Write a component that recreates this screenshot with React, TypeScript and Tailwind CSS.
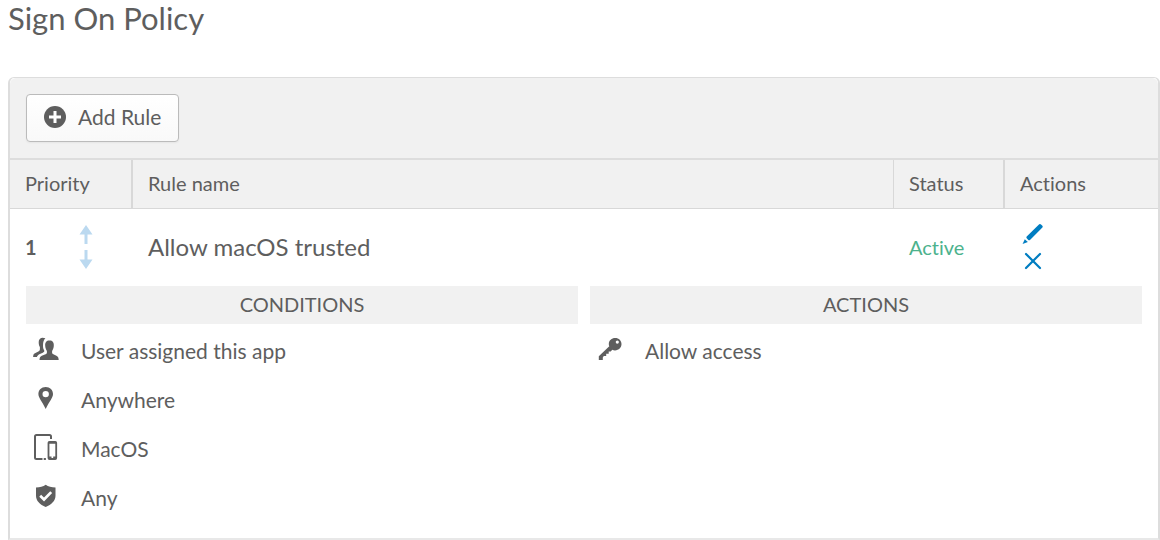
import type { ReactNode } from "react";

function PlusCircleIcon() {
  return (
    <svg width="22" height="22" viewBox="0 0 22 22" aria-hidden="true">
      <circle cx="11" cy="11" r="11" fill="#5e5e5e" />
      <path d="M11 5v12M5 11h12" stroke="#fff" strokeWidth="3" />
    </svg>
  );
}

function ArrowUpIcon() {
  return (
    <svg width="14" height="19" viewBox="0 0 14 19" fill="#bbd9f0" aria-hidden="true">
      <path d="M7 0l6.5 9.5h-5V19h-3V9.5h-5z" />
    </svg>
  );
}

function ArrowDownIcon() {
  return (
    <svg width="14" height="19" viewBox="0 0 14 19" fill="#bbd9f0" aria-hidden="true">
      <path d="M7 19L.5 9.5h5V0h3v9.5h5z" />
    </svg>
  );
}

function PencilIcon() {
  return (
    <svg width="22" height="22" viewBox="0 0 22 22" fill="#007dc1" aria-hidden="true">
      <path d="M17.200 1.300q.9-.8 1.800.1l1.400 1.400q.8.9 0 1.700L8 16.900q-.9.7-1.700 0l-1.600-1.600q-.8-.9 0-1.700z" />
      <path d="M2.800 16.200l3.100 2.900L.6 21z" />
    </svg>
  );
}

function CrossIcon() {
  return (
    <svg width="18" height="18" viewBox="0 0 18 18" fill="none" aria-hidden="true">
      <path d="M2 2l14 14M16 2L2 16" stroke="#007dc1" strokeWidth="2.2" strokeLinecap="round" />
    </svg>
  );
}

function PeopleIcon() {
  return (
    <svg width="26" height="24" viewBox="0 0 26 24" fill="#5e5e5e" aria-hidden="true">
      <path d="M12.400 1.300C8.600-.4 5.700 1.500 5.700 5c0 2 .3 3.600 1.200 5v2.300c0 1.200-.7 1.800-2 2.400L2 16.300C.6 17 .2 18 .1 20h3.800c.5-1.300 1.500-2.200 3-2.900l2.900-1.300c1.300-.6 1.900-1.400 1.200-2.700-.8-1.300-1-2.800-1-4.600 0-3.400.7-5.700 2.400-7.200z" />
      <path d="M16.500 3.600c3.200 0 4.500 2 4.300 5.200-.1 2-.7 3.900-1.700 5.100v1.900c0 .7.500 1.100 1.300 1.500l3 1.400c1.700.8 2.200 2 2.300 4.300H6.500c.1-2.300.6-3.500 2.300-4.300l3.800-1.400c.8-.4 1.300-.8 1.300-1.500v-1.900c-1-1.200-1.600-3.100-1.700-5.100-.2-3.200 1.100-5.200 4.300-5.200z" />
    </svg>
  );
}

function PinIcon() {
  return (
    <svg width="26" height="24" viewBox="0 0 26 24" fill="#5e5e5e" aria-hidden="true">
      <path
        fillRule="evenodd"
        d="M12.700 1c4.300 0 7.300 3.100 7.300 7.100 0 3.800-3.500 7.100-7.300 14.900C8.900 15.200 5.400 11.900 5.400 8.100 5.400 4.100 8.400 1 12.700 1zm0 3.900a3.200 3.200 0 100 6.400 3.200 3.200 0 000-6.400z"
      />
    </svg>
  );
}

function DevicesIcon() {
  return (
    <svg width="26" height="26" viewBox="0 0 26 26" fill="none" stroke="#5e5e5e" aria-hidden="true">
      <path d="M18 5V2.500Q18 1 16.500 1H3.500Q2 1 2 2.500V23.500Q2 25 3.500 25H9.500M10.700 25h2.200" strokeWidth="2" />
      <rect x="15.500" y="7.800" width="7.700" height="17.200" rx="1" strokeWidth="1.800" />
      <path d="M15.500 8.800h7.700M15.500 23.400h3M20.200 23.400h3" strokeWidth="2" />
    </svg>
  );
}

function ShieldIcon() {
  return (
    <svg width="26" height="24" viewBox="0 0 26 24" aria-hidden="true">
      <path
        d="M12.700.7c2.500 1.900 5.900 2.700 9.800 2.700v8.300c0 5.100-4 8.700-9.800 11.300C6.900 20.400 3 16.800 3 11.700V3.400c3.900 0 7.200-.8 9.700-2.700z"
        fill="#5e5e5e"
      />
      <path d="M7.200 11.800l3.800 3.700 7.200-7.400" fill="none" stroke="#fff" strokeWidth="2.700" />
    </svg>
  );
}

function KeyIcon() {
  return (
    <svg width="26" height="24" viewBox="0 0 26 24" fill="#5e5e5e" aria-hidden="true">
      <path
        fillRule="evenodd"
        d="M18.200 1c3.800 0 6.300 2.600 6.300 6.100 0 3.700-2.700 6.300-6.500 6.300-1 0-1.900-.2-2.700-.6L13.700 14.500h-2v2.200H9.200V19H6.800l-1 1.500V23H1.800v-3.700L12.300 9.200c-.4-.7-.5-1.400-.5-2.200C11.800 3.500 14.700 1 18.200 1zm2.100 2.500a1.600 1.600 0 100 3.200 1.600 1.600 0 000-3.200z"
      />
    </svg>
  );
}

type Item = { icon: ReactNode; text: string };

const conditions: Item[] = [
  { icon: <PeopleIcon />, text: "User assigned this app" },
  { icon: <PinIcon />, text: "Anywhere" },
  { icon: <DevicesIcon />, text: "MacOS" },
  { icon: <ShieldIcon />, text: "Any" },
];

const actions: Item[] = [{ icon: <KeyIcon />, text: "Allow access" }];

function DetailColumn({ title, items }: { title: string; items: Item[] }) {
  return (
    <section className="flex-1">
      <h2 className="bg-[#f1f1f1] pb-0.5 text-center text-xl leading-9">{title}</h2>
      <ul className="pt-0.5">
        {items.map((item) => (
          <li key={item.text} className="flex h-[49px] items-center gap-[22px] pl-[7px]">
            <span className="pb-1">{item.icon}</span>
            <span className="text-[21px]">{item.text}</span>
          </li>
        ))}
      </ul>
    </section>
  );
}

export default function App() {
  return (
    <main className="bg-white pl-2 font-['Lato','Noto_Sans',sans-serif] text-[#5e5e5e] [font-variant-ligatures:none]">
      <h1 className="pb-10 text-[31px] leading-[37px] font-normal">Sign On Policy</h1>
      <div className="rounded-t-md border-2 border-t border-[#dddddd] border-b-[#e8e8e8]">
        <div className="rounded-t-md border-b-2 border-[#dddddd] bg-[#f1f1f1] p-4">
          <button
            type="button"
            className="flex h-12 items-center gap-3 rounded border border-[#bbbbbb] bg-linear-to-b from-white to-[#f9f9f9] px-[17px] pb-0.5 text-[21px] shadow-xs"
          >
            <PlusCircleIcon />
            Add Rule
          </button>
        </div>
        <table className="w-full table-fixed border-separate border-spacing-0 text-left">
          <thead>
            <tr className="h-[49px] bg-[#f1f1f1] text-xl *:border-b *:border-[#d8d8d8] *:px-[15px] *:pb-0.5 *:font-normal">
              <th scope="col" className="w-[123px] border-r-2">Priority</th>
              <th scope="col" className="border-r">Rule name</th>
              <th scope="col" className="w-[111px] border-r-2">Status</th>
              <th scope="col" className="w-[153px]">Actions</th>
            </tr>
          </thead>
          <tbody>
            <tr className="h-[77px] *:px-[15px] *:pb-0.5">
              <td>
                <div className="flex items-center">
                  <span className="w-[54px] text-xl font-bold">1</span>
                  <span className="flex flex-col gap-[6px]">
                    <ArrowUpIcon />
                    <ArrowDownIcon />
                  </span>
                </div>
              </td>
              <td className="text-2xl">Allow macOS trusted</td>
              <td className="text-xl text-[#4cb28d]">Active</td>
              <td>
                <div className="flex w-[26px] flex-col items-center gap-[7px]">
                  <button type="button" aria-label="Edit rule">
                    <PencilIcon />
                  </button>
                  <button type="button" aria-label="Delete rule">
                    <CrossIcon />
                  </button>
                </div>
              </td>
            </tr>
            <tr>
              <td colSpan={4} className="px-4 pb-4">
                <div className="flex gap-3">
                  <DetailColumn title="CONDITIONS" items={conditions} />
                  <DetailColumn title="ACTIONS" items={actions} />
                </div>
              </td>
            </tr>
          </tbody>
        </table>
      </div>
    </main>
  );
}
